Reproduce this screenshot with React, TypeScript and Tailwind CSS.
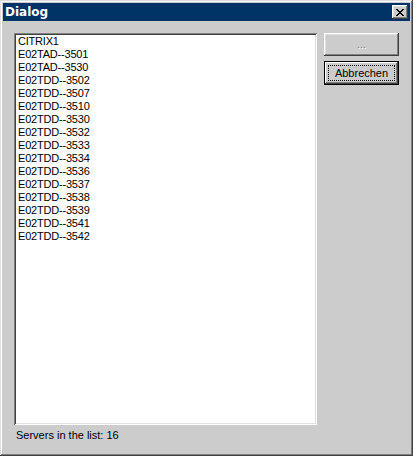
const servers = [
  'CITRIX1',
  'E02TAD--3501',
  'E02TAD--3530',
  'E02TDD--3502',
  'E02TDD--3507',
  'E02TDD--3510',
  'E02TDD--3530',
  'E02TDD--3532',
  'E02TDD--3533',
  'E02TDD--3534',
  'E02TDD--3536',
  'E02TDD--3537',
  'E02TDD--3538',
  'E02TDD--3539',
  'E02TDD--3541',
  'E02TDD--3542',
]

const raised =
  'shadow-[inset_-1px_-1px_#404040,inset_1px_1px_#ffffff,inset_-2px_-2px_#808080,inset_2px_2px_#dfdfdf]'

export default function App() {
  return (
    <div className="w-[413px] h-[456px] bg-[#cccccc] p-[3px] font-['Liberation_Sans',Arial,sans-serif] text-[11px] text-black shadow-[inset_-1px_-1px_#404040,inset_1px_1px_#dfdfdf,inset_-2px_-2px_#808080,inset_2px_2px_#ffffff]">
      <TitleBar title="Dialog" />

      <div className="flex gap-[7px] pl-[11px] pt-[12px]">
        <div className="flex flex-col">
          <div className="w-[303px] h-[392px] bg-white pl-[4px] pt-[2px] tracking-[-0.2px] shadow-[inset_1px_1px_#808080,inset_-1px_-1px_#ffffff,inset_2px_2px_#404040,inset_-2px_-2px_#dfdfdf]">
            {servers.map((s) => (
              <div key={s} className="h-[13px] leading-[13px]">
                {s}
              </div>
            ))}
          </div>
          <p className="pl-[2px] pt-[4px] leading-[13px]">Servers in the list: 16</p>
        </div>

        <div className="flex flex-col gap-[5px]">
          <button
            disabled
            className={`w-[75px] h-[23px] bg-[#cccccc] text-[#808080] [text-shadow:1px_1px_#ffffff] ${raised}`}
          >
            ...
          </button>
          <button className="w-[75px] h-[24px] bg-[#cccccc] p-[4px] shadow-[inset_0_0_0_1px_#000000,inset_-2px_-2px_#404040,inset_2px_2px_#ffffff,inset_-3px_-3px_#808080]">
            <span className="flex h-full items-center justify-center border border-dotted border-black leading-none">
              Abbrechen
            </span>
          </button>
        </div>
      </div>
    </div>
  )
}

const TitleBar = ({ title }: { title: string }) => {
  return (
    <div className="flex h-[18px] items-center justify-between bg-[#003366] pl-[2px] pr-[2px]">
      <span className="font-['DejaVu_Sans',sans-serif] text-[12px] font-bold text-white">{title}</span>
      <button className={`flex w-[16px] h-[14px] items-center justify-center bg-[#cccccc] ${raised}`}>
        <svg width="8" height="7" viewBox="0 0 8 7" shapeRendering="crispEdges">
          <path d="M0 0h2v1h-2zM6 0h2v1h-2zM1 1h2v1h-2zM5 1h2v1h-2zM2 2h4v1h-4zM3 3h2v1h-2zM2 4h4v1h-4zM1 5h2v1h-2zM5 5h2v1h-2zM0 6h2v1h-2zM6 6h2v1h-2z" fill="#000" />
        </svg>
      </button>
    </div>
  )
}
